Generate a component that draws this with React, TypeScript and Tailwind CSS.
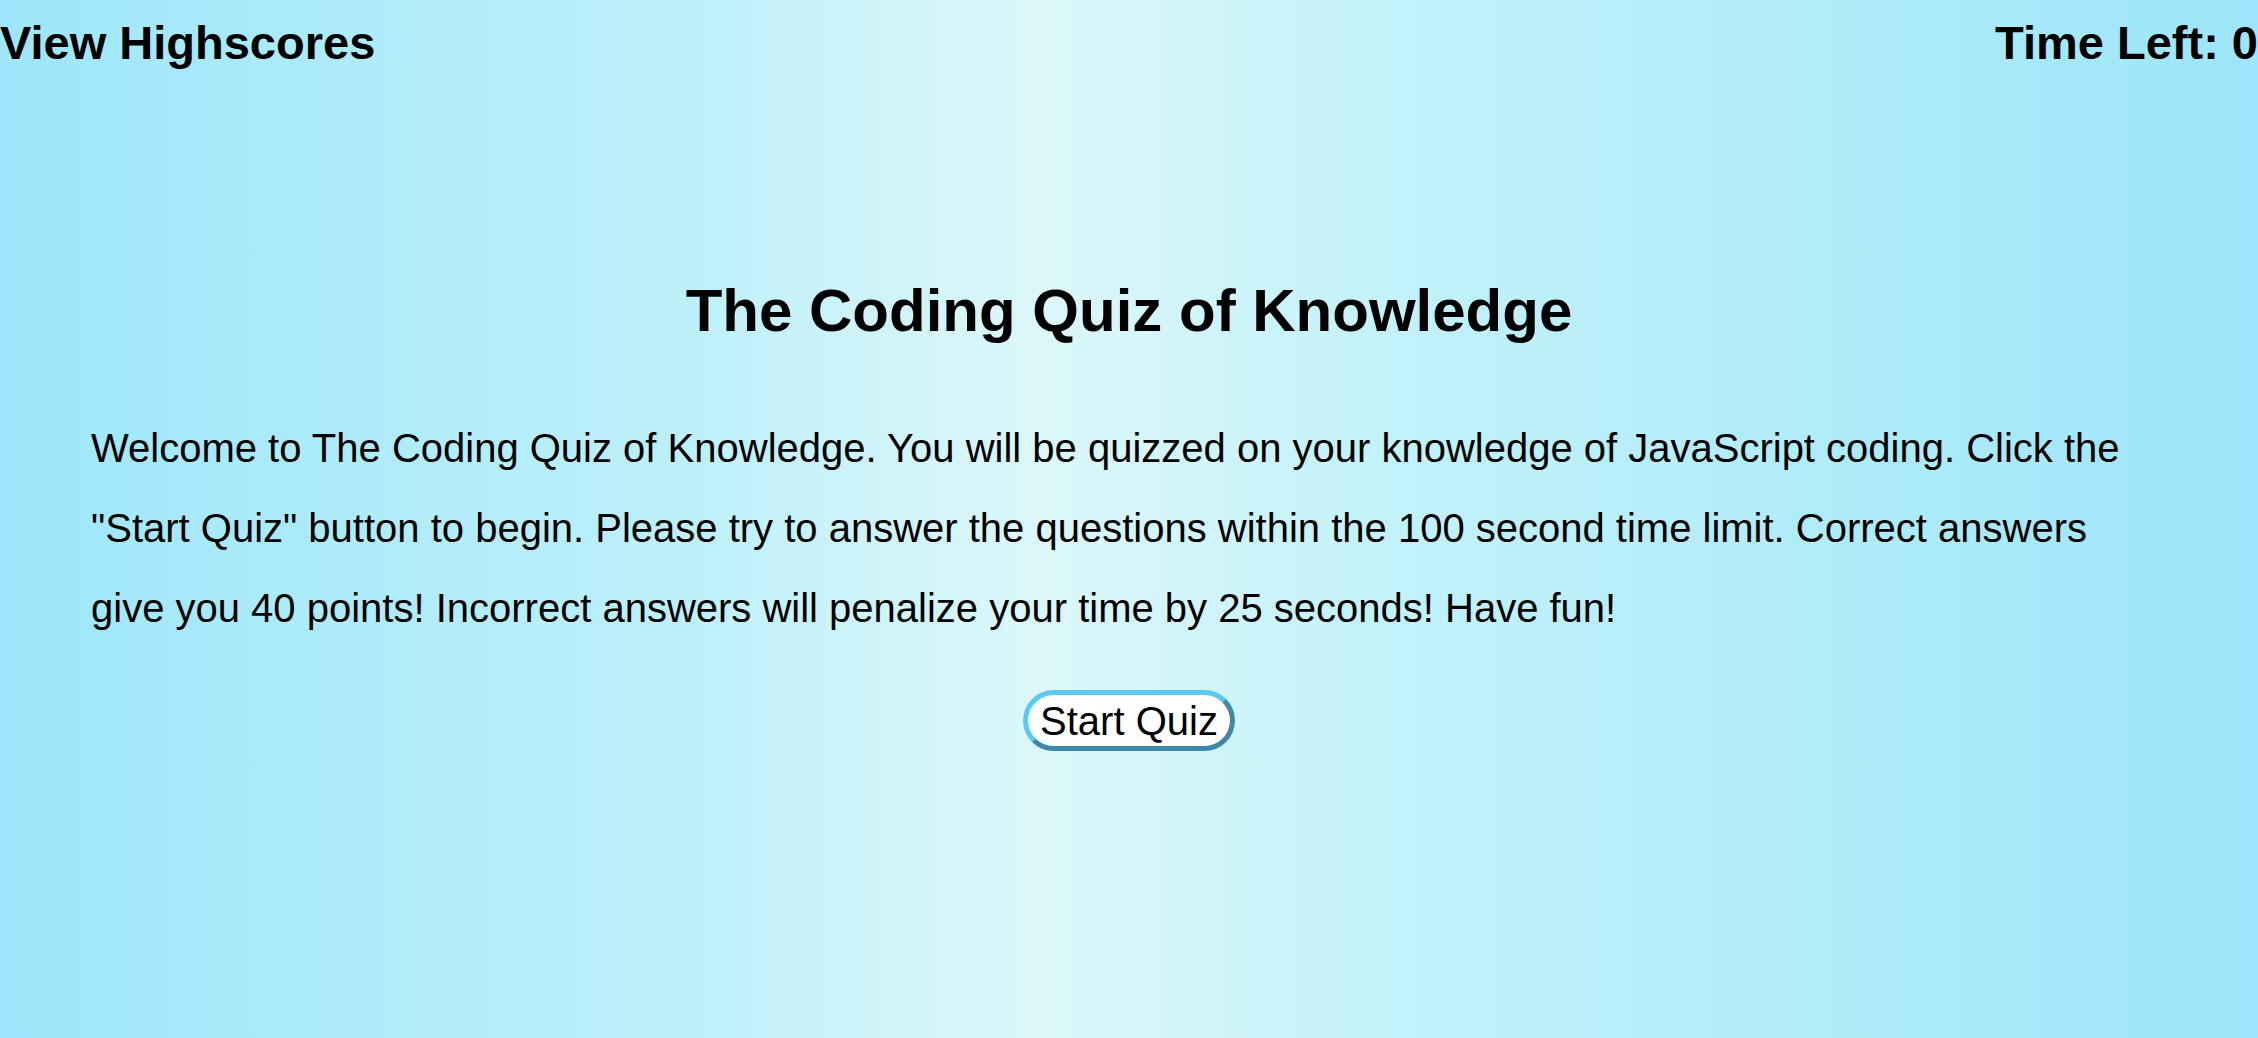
import React from "react";

function App() {
  return (
    <div
      className="min-h-[1038px] w-full bg-[linear-gradient(to_right,#9ee6fa_0%,#bdf0fa_30%,#dcf7f9_46%,#c2f2fa_62%,#9de5f9_100%)] text-black"
      style={{ fontFamily: '"Liberation Sans", Arial, Helvetica, sans-serif' }}
    >
      {/* top bar */}
      <header className="flex justify-between pt-[16px] text-[47px] font-bold leading-[53px]">
        <a className="cursor-pointer">View Highscores</a>
        <span>Time Left: 0</span>
      </header>

      {/* start screen */}
      <main className="flex flex-col items-center pt-[207px]">
        <h1 className="text-[60px] font-bold leading-[69px]">The Coding Quiz of Knowledge</h1>
        <p className="mt-[63px] w-full px-[91px] text-[40px] leading-[80px]">
          Welcome to The Coding Quiz of Knowledge. You will be quizzed on your knowledge of JavaScript coding. Click the
          "Start Quiz" button to begin. Please try to answer the questions within the 100 second time limit. Correct
          answers give you 40 points! Incorrect answers will penalize your time by 25 seconds! Have fun!
        </p>
        <button className="mt-[42px] h-[61px] w-[212px] rounded-full border-[5px] border-t-[#5bc9f6] border-l-[#5bc9f6] border-b-[#3f88aa] border-r-[#3f88aa] bg-white text-[40px] leading-none">
          Start Quiz
        </button>
      </main>
    </div>
  );
}

export default App;
